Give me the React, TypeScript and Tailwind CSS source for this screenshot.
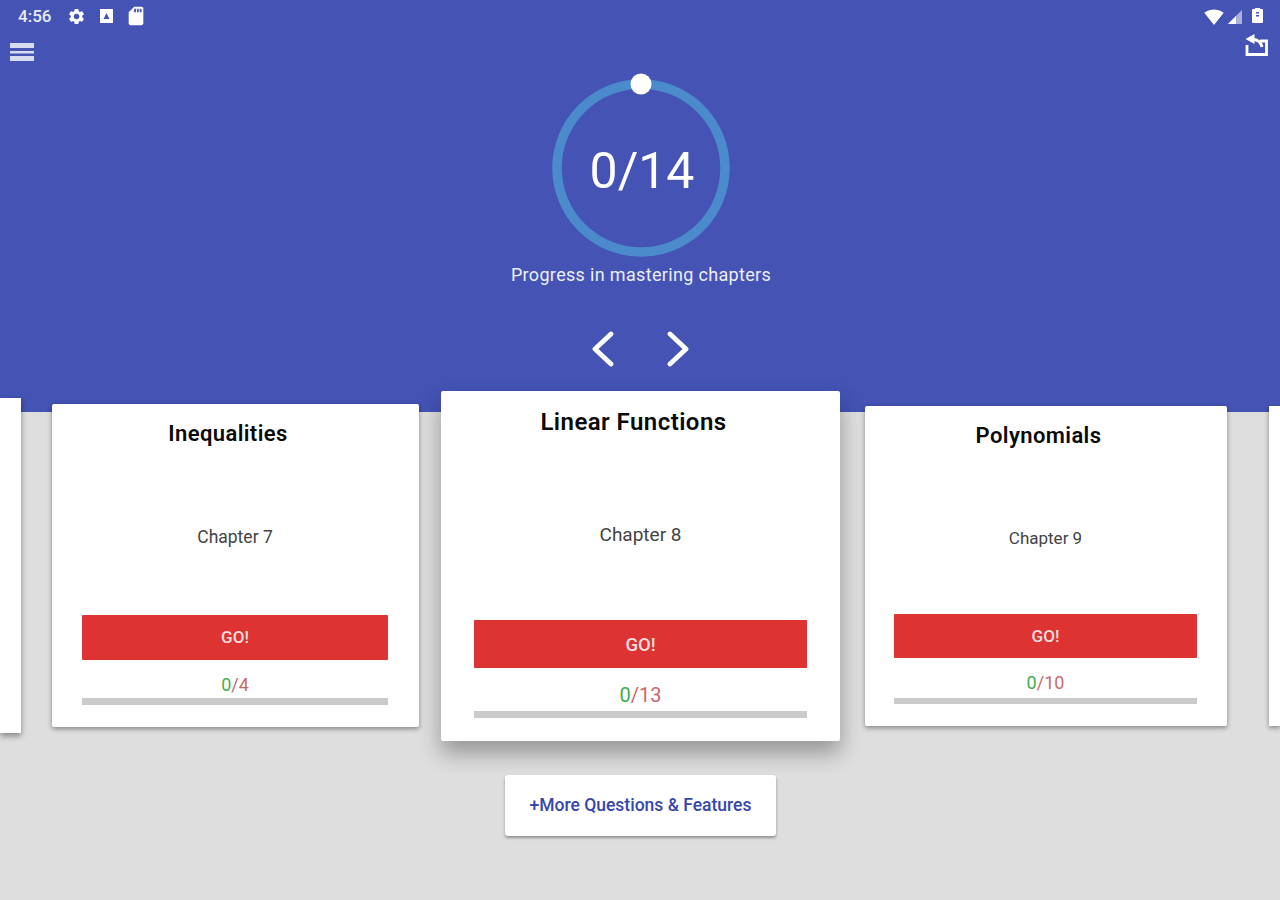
import React from 'react';
import { MdSettings, MdSdStorage, MdSignalWifi4Bar } from 'react-icons/md';

interface ChapterCard {
  title: string;
  chapter: string;
  total: number;
  root: string;
  titleClass: string;
  chapterClass: string;
  buttonClass: string;
  countClass: string;
  barClass: string;
}

const cards: ChapterCard[] = [
  {
    title: 'Inequalities',
    chapter: 'Chapter 7',
    total: 4,
    root: 'ml-[31px] mt-[13px] w-[367px] h-[323px] pl-[30px] pr-[31px] pt-[18px] shadow-[0_2px_5px_rgba(0,0,0,0.4)]',
    titleClass: 'text-[22px] leading-[24px] tracking-[0.4px]',
    chapterClass: 'mt-[79px] text-[17.500px] leading-[24px]',
    buttonClass: 'mt-[66px] h-[45px] pt-[1px] text-[17px]',
    countClass: 'mt-[15px] text-[18px] leading-[20px]',
    barClass: 'mt-[3px] h-[7px]',
  },
  {
    title: 'Linear Functions',
    chapter: 'Chapter 8',
    total: 13,
    root: 'ml-[22px] w-[399px] h-[350px] px-[33px] pt-[17px] shadow-[0_12px_22px_rgba(0,0,0,0.33)]',
    titleClass: 'text-[24px] leading-[28px] tracking-[0.45px]',
    chapterClass: 'mt-[87px] text-[19px] leading-[24px]',
    buttonClass: 'mt-[73px] h-[48px] pt-[3px] text-[18.500px]',
    countClass: 'mt-[15px] text-[20px] leading-[24px]',
    barClass: 'mt-[4px] h-[7px]',
  },
  {
    title: 'Polynomials',
    chapter: 'Chapter 9',
    total: 10,
    root: 'ml-[25px] mt-[15px] w-[362px] h-[320px] pl-[29px] pr-[30px] pt-[18px] shadow-[0_2px_5px_rgba(0,0,0,0.4)]',
    titleClass: 'text-[22px] leading-[24px] tracking-[0.4px]',
    chapterClass: 'mt-[78px] text-[17px] leading-[24px]',
    buttonClass: 'mt-[64px] h-[44px] pt-[2px] text-[17px]',
    countClass: 'mt-[15px] text-[18px] leading-[20px]',
    barClass: 'mt-[5px] h-[6px]',
  },
];

const Card: React.FC<{ card: ChapterCard }> = ({ card }) => (
  <div className={`shrink-0 flex flex-col bg-white rounded-[2px] ${card.root}`}>
    <h2 className={`pr-[14px] text-center font-semibold text-[#0a0a0a] ${card.titleClass}`}>{card.title}</h2>
    <p className={`text-center text-[#444444] ${card.chapterClass}`}>{card.chapter}</p>
    <button className={`w-full shrink-0 flex items-center justify-center bg-[#dd3333] rounded-[1px] font-medium text-[#f6dede] ${card.buttonClass}`}>
      GO!
    </button>
    <p className={`text-center ${card.countClass}`}>
      <span className="text-[#3fae49]">0</span>
      <span className="text-[#c9686c]">/{card.total}</span>
    </p>
    <div className={`w-full shrink-0 bg-[#cbcbcb] ${card.barClass}`} />
  </div>
);

export default function App() {
  return (
    <div className="w-[1280px] h-[900px] overflow-hidden bg-[#dedede] font-['Roboto',sans-serif]">
      {/* Blue header */}
      <header className="h-[412px] bg-[#4453b4] text-white flex flex-col">
        <div className="h-[33px] flex items-center pl-[18px] pr-[17px]">
          <span className="text-[17px] font-medium w-[34px] text-[#e8eaf6]">4:56</span>
          <MdSettings className="ml-[15px] w-[19px] h-[19px]" />
          <svg className="ml-[13px] w-[15px] h-[16px] -translate-y-[1px]" viewBox="0 0 15 16">
            <path fillRule="evenodd" fill="#ffffff" d="M1 1h13v14H1zM7.500 5L4.500 11h6z" />
          </svg>
          <MdSdStorage className="ml-[11px] w-[22px] h-[22px] -translate-y-[1px]" />
          <MdSignalWifi4Bar className="ml-auto w-[20px] h-[20px]" />
          <svg className="ml-[3px] w-[16px] h-[16px]" viewBox="0 0 16 16">
            <path fill="#ffffff" fillOpacity="0.55" d="M1 15L15 1v14z" />
            <path fill="#ffffff" d="M9 15V7l-8 8z" />
          </svg>
          <svg className="ml-[9px] w-[11px] h-[17px] -translate-y-[1px]" viewBox="0 0 11 17">
            <path fill="#ffffff" d="M3 1h5v1h2a1 1 0 0 1 1 1v12a1 1 0 0 1-1 1H1a1 1 0 0 1-1-1V3a1 1 0 0 1 1-1h2z" />
            <path fill="#4453b4" d="M4 5h3v1.500H4zM4 8h3v1.500H4z" />
          </svg>
        </div>
        <div className="h-[40px] flex items-start justify-between pl-[10px] pr-[11px]">
          <svg className="mt-[10px] w-[24px] h-[18px]" viewBox="0 0 24 18" fill="#d9dcf1">
            <rect x="0" y="0" width="24" height="5" />
            <rect x="0" y="8" width="24" height="2.500" />
            <rect x="0" y="13" width="24" height="5" />
          </svg>
          <svg className="mt-[1px] w-[25px] h-[23px]" viewBox="0 0 25 23" fill="none" stroke="#ffffff" strokeWidth="2.800">
            <path d="M16 7h6.500v13.500H3V11" />
            <path d="M18 13c-1-4-4-7.500-9-7.500" strokeWidth="3" />
            <path fill="#ffffff" stroke="none" d="M10.500 0v10L1.500 5z" />
          </svg>
        </div>

        <div className="flex flex-col items-center">
          <svg className="w-[190px] h-[190px] ml-[2px]" viewBox="0 0 190 190">
            <circle cx="95" cy="95" r="84" fill="none" stroke="#4b8bcc" strokeWidth="9.500" />
            <circle cx="95" cy="11" r="10.500" fill="#ffffff" />
            <text x="96" y="115" textAnchor="middle" fill="#ffffff" fontSize="50" fontFamily="Roboto, sans-serif">
              0/14
            </text>
          </svg>
          <p className="text-[18px] leading-[24px] tracking-[0.33px] text-[#eceef9] ml-[2px]">Progress in mastering chapters</p>
          <div className="mt-[44px] flex gap-[53px]">
            <svg className="w-[22px] h-[36px]" viewBox="0 0 22 36" fill="none" stroke="#ffffff" strokeWidth="4.800" strokeLinecap="round" strokeLinejoin="round">
              <path d="M19 3L3 18l16 15" />
            </svg>
            <svg className="w-[22px] h-[36px]" viewBox="0 0 22 36" fill="none" stroke="#ffffff" strokeWidth="4.800" strokeLinecap="round" strokeLinejoin="round">
              <path d="M3 3l16 15L3 33" />
            </svg>
          </div>
        </div>
      </header>

      {/* Chapter carousel */}
      <div className="-mt-[21px] flex items-start h-[350px]">
        <div className="shrink-0 w-[21px] h-[335px] mt-[7px] bg-white shadow-[0_3px_6px_rgba(0,0,0,0.4)]" />
        {cards.map((card) => (
          <Card key={card.title} card={card} />
        ))}
        <div className="shrink-0 w-[11px] h-[320px] ml-[42px] mt-[15px] bg-white shadow-[0_2px_5px_rgba(0,0,0,0.4)]" />
      </div>

      <div className="mt-[34px] pl-[1px] flex justify-center">
        <button className="w-[271px] h-[61px] bg-white rounded-[3px] shadow-[0_2px_3px_rgba(0,0,0,0.35)] text-[17.500px] font-medium text-[#3646ad]">
          +More Questions &amp; Features
        </button>
      </div>
    </div>
  );
}
